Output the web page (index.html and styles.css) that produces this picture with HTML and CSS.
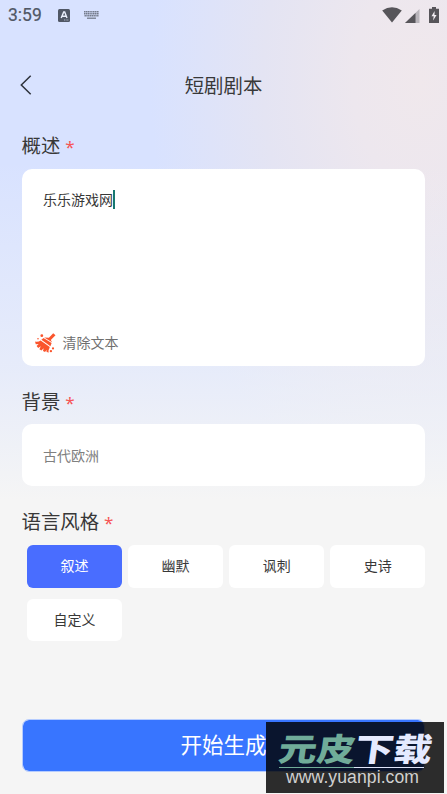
FILE: index.html
```html
<!DOCTYPE html>
<html lang="zh-CN">
<head>
<meta charset="utf-8">
<title>短剧剧本</title>
<link rel="stylesheet" href="styles.css">
</head>
<body>
<main class="screen">
  <header class="status">
    <span class="time">3:59</span>
    <svg class="input-icon" width="12" height="13" viewBox="0 0 12 13"><rect width="12" height="13" rx="1.5" fill="#505765"/><path d="M3.2 9 5.7 3h1L9 9M4.2 7.2h3.7" fill="none" stroke="#e9eefb" stroke-width="1.4"/><path d="M6 11h5" stroke="#c5cede" stroke-width=".8" stroke-dasharray="1 .6"/></svg>
    <svg class="keyboard" width="15" height="8" viewBox="0 0 15 8"><path d="M0 .8h15M0 2.8h15M.5 4.8h14" stroke="#747b8b" stroke-width="1.5" stroke-dasharray="1.4 .4"/><path d="M3 7.2h9" stroke="#747b8b" stroke-width="1.3"/></svg>
    <span class="spacer"></span>
    <svg class="wifi" width="20" height="16" viewBox="0 0 20 16"><path d="M.2 3.5Q10-3 19.8 3.5L10 15.6Z" fill="#57555a"/></svg>
    <svg class="signal" width="15" height="14" viewBox="0 0 15 14"><path d="M0 14 14.5 0v14Z" fill="#b9b5bb"/><path d="M0 14 10.5 3.9V14Z" fill="#57555a"/></svg>
    <svg class="battery" width="10" height="16" viewBox="0 0 10 16"><path d="M3 0h4v1.8h3V16H0V1.8h3Z" fill="#57555a"/><path d="M5.6 4 2.5 9.3h2.2L4.1 13.5 7.6 8H5.5Z" fill="#f4eff4"/></svg>
  </header>

  <nav class="navbar">
    <svg class="back" width="12" height="20" viewBox="0 0 12 20"><path d="M10.7.8 1.3 10l9.4 9.2" fill="none" stroke="#2e323b" stroke-width="1.5"/></svg>
    <h1>短剧剧本</h1>
  </nav>

  <h2 class="label summary-label">概述<span class="required">*</span></h2>
  <section class="summary">
    <p class="value">乐乐游戏网<span class="caret"></span></p>
    <div class="clear">
      <svg width="21" height="20" viewBox="0 0 21 20"><g fill="#fa552d"><path d="M18.2.2 20.5 2.3 15.8 7l1.3 2.2L9.2 4.5l4.7.3Z"/><path d="m8.5 5 8.1 5.1-1.2 3.2L6.4 6.8Z"/><path d="m5.6 7.6 9.2 6.5-.7 1.8c-.8 1.4-.7 2.6-.2 3.6l-2.4-.4.2-2.2-1.7 2-2-.8.7-2.9-2.3 2.3-2-1.2 1.4-3.1-2.6 1.7L1.6 13l2-2L.8 11.3 0 8.6c2.2.4 4.1.1 5.6-1Z"/><circle cx="6.8" cy="2.7" r="1.4"/><circle cx="3" cy="5.7" r=".8"/><circle cx="18" cy="15.4" r="1.1"/><circle cx="15.9" cy="18.1" r="1.2"/></g></svg>
      <span>清除文本</span>
    </div>
  </section>

  <h2 class="label background-label">背景<span class="required">*</span></h2>
  <section class="setting">古代欧洲</section>

  <h2 class="label style-label">语言风格<span class="required">*</span></h2>
  <section class="options">
    <span class="option selected">叙述</span>
    <span class="option">幽默</span>
    <span class="option">讽刺</span>
    <span class="option">史诗</span>
    <span class="option">自定义</span>
  </section>

  <div class="generate">开始生成</div>

  <aside class="site-mark">
    <svg width="178" height="71" viewBox="0 0 178 71">
      <g class="brand" transform="translate(9 38.5) skewX(-8) scale(1.08 .9)">
        <text class="green" x="2" y="0">元皮</text>
        <text class="white" x="73" y="0">下载</text>
      </g>
      <path d="M13 45.5h75" stroke="#70ac99"/>
      <path d="M88 45.5h70" stroke="#dfe5fa"/>
      <text class="url" x="20" y="61" textLength="133">www.yuanpi.com</text>
    </svg>
  </aside>
</main>
</body>
</html>
```
FILE: styles.css
```css
* { box-sizing: border-box; }
body {
  margin: 0;
  font-family: "Noto Sans CJK SC", sans-serif;
  color: #383838;
}
.screen {
  position: relative;
  display: flex;
  flex-direction: column;
  height: 794px;
  overflow: hidden;
  background:
    linear-gradient(180deg, rgba(245,245,245,0) 160px, rgba(245,245,245,.5) 370px, #f5f5f5 500px),
    radial-gradient(ellipse 270px 420px at 420px 80px, #f0e8ec 0, #ede7ee 25%, #e4e4f3 58%, #d8e2ff 100%);
}
.status {
  display: flex;
  align-items: center;
  height: 30px;
  padding: 0 8px;
}
.time {
  width: 50px;
  font: 400 17.5px/30px Roboto, sans-serif;
  color: #505765;
  -webkit-text-stroke: .2px #505765;
}
.keyboard { margin-left: 14px; }
.spacer { flex: 1; }
.signal { margin: 1px 9px 0 3px; }
.navbar {
  display: flex;
  align-items: center;
  height: 48px;
  margin-top: 31px;
  padding-left: 20px;
}
.back { margin-top: -1px; }
.navbar h1 {
  flex: 1;
  margin: -1px 32px 0 0;
  text-align: center;
  font-size: 19.4px;
  line-height: 47px;
  font-weight: 400;
}
.label {
  display: flex;
  height: 30px;
  margin: 0 0 0 21.5px;
  font-size: 19.4px;
  line-height: 30px;
  font-weight: 400;
}
.required {
  margin: 2px 0 0 5px;
  color: #f65555;
  font-family: "Noto Sans", sans-serif;
  font-size: 17px;
}
.summary-label { margin-top: 21px; }
.summary {
  display: flex;
  flex-direction: column;
  justify-content: space-between;
  height: 197px;
  margin: 9px 22px 0;
  padding: 21px 13px 11px;
  border-radius: 10px;
  background: #fff;
}
.value {
  display: flex;
  margin: 0 0 0 8px;
  font-size: 14px;
  line-height: 18px;
}
.caret { width: 2px; height: 19px; background: #18796f; }
.clear {
  display: flex;
  align-items: center;
  gap: 7px;
  height: 24px;
  font-size: 14px;
  color: #6f6f6f;
}
.clear span { margin: -2px 0 0 -.5px; }
.background-label { margin-top: 20px; }
.setting {
  height: 62px;
  margin: 8px 22px 0;
  padding-left: 21px;
  border-radius: 10px;
  background: #fff;
  color: #808080;
  font-size: 14px;
  line-height: 62px;
}
.style-label { margin-top: 20px; }
.options {
  display: grid;
  grid-template-columns: repeat(4, 95px);
  gap: 11px 6.1px;
  margin: 9px 0 0 27px;
}
.option {
  height: 42.5px;
  border-radius: 6px;
  background: #fff;
  text-align: center;
  font-size: 14px;
  line-height: 41px;
}
.selected { background: #496dff; color: #fff; }
.generate {
  height: 53px;
  margin: 78px 22px 0;
  border: 1px solid #b5ccff;
  border-radius: 7px;
  background: #3875ff;
  background-clip: padding-box;
  color: #fff;
  text-align: center;
  font-size: 21.5px;
  line-height: 47px;
}
.site-mark {
  position: absolute;
  left: 266px;
  top: 722px;
  width: 178px;
  height: 71px;
  background: rgba(0,0,0,.82);
}
.site-mark svg { display: block; }
.brand { font-size: 35.5px; font-weight: 900; }
.green { fill: #70ac99; }
.white { fill: #e5eaff; }
.url { font: 17.6px "Liberation Sans", sans-serif; fill: #d0d0d0; }
```
